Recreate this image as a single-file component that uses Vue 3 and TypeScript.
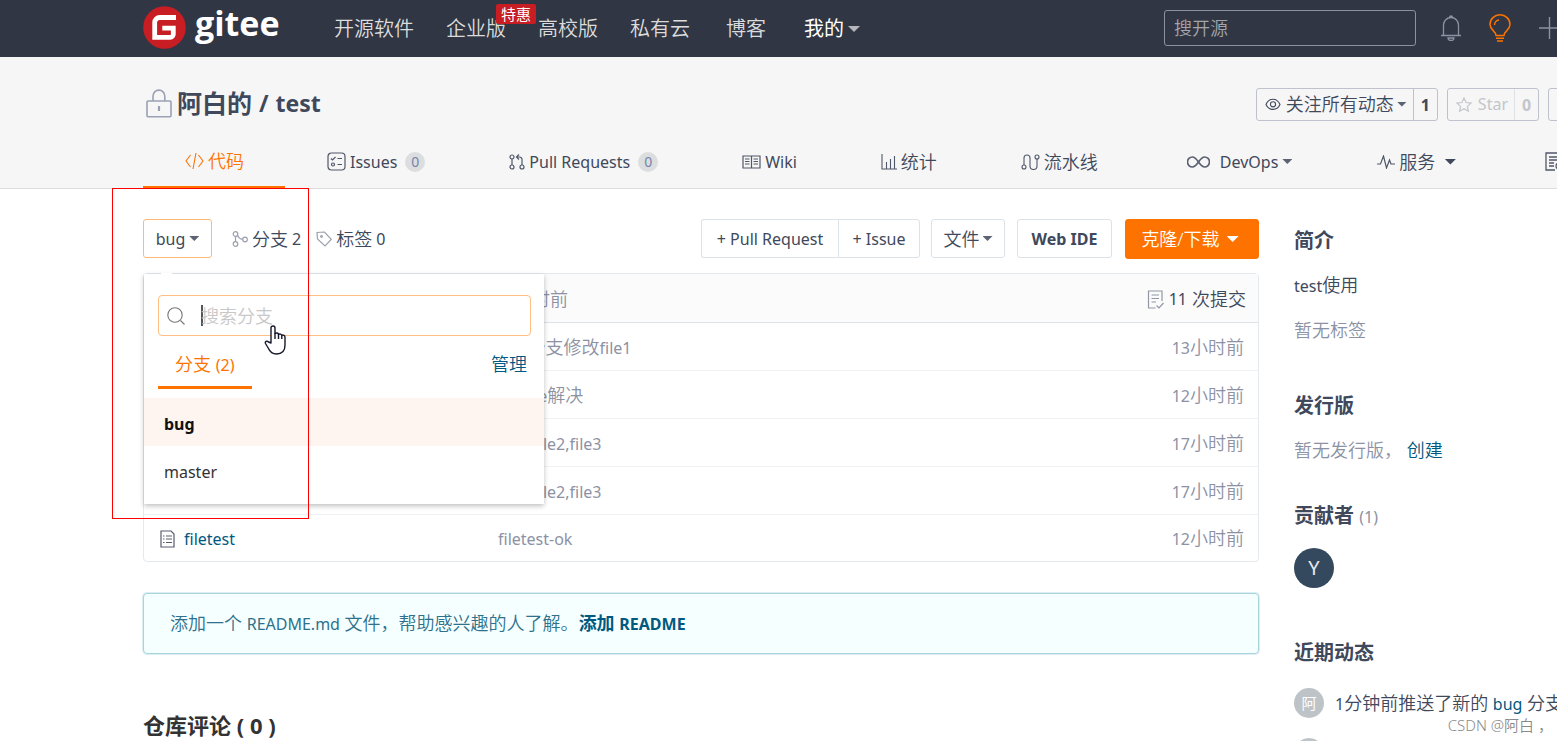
<script setup lang="ts">
import { ref } from 'vue'

interface FileRow {
  name: string
  latinBefore: string
  cjk: string
  latinAfter: string
  hours: number
}

const rows: FileRow[] = [
  { name: 'file1', latinBefore: 'bug', cjk: '分支修改', latinAfter: 'file1', hours: 13 },
  { name: 'file2', latinBefore: 'merge', cjk: '解决', latinAfter: '', hours: 12 },
  { name: 'file3', latinBefore: 'new file2,file3', cjk: '', latinAfter: '', hours: 17 },
  { name: 'file4', latinBefore: 'new file2,file3', cjk: '', latinAfter: '', hours: 17 },
  { name: 'filetest', latinBefore: 'filetest-ok', cjk: '', latinAfter: '', hours: 12 },
]

const branches = ['bug', 'master']
const current = ref('bug')
const keyword = ref('')
const siteKeyword = ref('')
</script>

<template>
  <div class="page">
    <header class="topbar">
      <a class="logo" href="#" aria-label="gitee">
        <svg width="43" height="43" viewBox="0 0 43 43">
          <circle cx="21.500" cy="21.500" r="21.300" fill="#c71d23" />
          <path d="M33 11.500H16.700a5 5 0 0 0-5 5V31.300H27.300a3 3 0 0 0 3-3V22.200H19.300" fill="none" stroke="#fff" stroke-width="4.800" />
        </svg>
        <span class="logo-text">gitee</span>
      </a>
      <nav class="mainnav">
        <a href="#">开源软件</a>
        <a href="#" class="promo">企业版<span class="promo-tag">特惠</span></a>
        <a href="#">高校版</a>
        <a href="#">私有云</a>
        <a href="#">博客</a>
        <a href="#" class="mine">我的<i class="caret" /></a>
      </nav>
      <input v-model="siteKeyword" class="site-search" type="text" placeholder="搜开源" aria-label="搜开源" />
      <div class="top-icons">
        <button type="button" aria-label="通知">
          <svg width="20" height="26" viewBox="0 0 20 26" fill="none" stroke="#8c92a4" stroke-width="1.300">
            <path d="M0 20.500H20M2.500 20.500V10a7.500 7.500 0 0 1 15 0V20.500M8.500 2.500a1.500 1.500 0 0 1 3 0M7 23a3 2.500 0 0 0 6 0Z" />
          </svg>
        </button>
        <button type="button" aria-label="提示">
          <svg width="22" height="28" viewBox="0 0 22 28" fill="none" stroke="#fe7300" stroke-width="1.500">
            <path d="M7 21.500C7 17 1 16 1 10.500a10 9.700 0 0 1 20 0C21 16 15 17 15 21.500Z" />
            <path d="M5.500 11a5 5 0 0 1 4.500-5M7 24.200h8M8 27h6" />
          </svg>
        </button>
        <button type="button" aria-label="新建">
          <svg width="20" height="22" viewBox="0 0 20 22" fill="none" stroke="#8c92a4" stroke-width="1.400">
            <path d="M0 11H20M10.500 0V22" />
          </svg>
        </button>
      </div>
    </header>

    <section class="repo-head">
      <div class="repo-line">
        <h1>
          <svg width="26" height="29" viewBox="0 0 26 29" fill="none" stroke="#9aa1b5" stroke-width="1.600">
            <rect x="1" y="12" width="24" height="15.800" rx="1" />
            <path d="M7 12V7a5.800 5.800 0 0 1 11.800 0V12" />
            <path d="M13 17V22" stroke-width="2.200" />
          </svg>
          <a href="#">阿白的</a><span class="lat">/</span><a href="#" class="lat">test</a>
        </h1>
        <div class="repo-actions">
          <div class="split">
            <button type="button" class="watch">
              <svg width="16" height="13" viewBox="0 0 16 13" fill="none" stroke="#40485b" stroke-width="1.100">
                <path d="M1 6.500C4-.500 12-.500 15 6.500 12 13 4 13 1 6.500Z" />
                <circle cx="8" cy="6.300" r="2.600" />
              </svg>
              关注所有动态<i class="caret small" />
            </button>
            <a href="#" class="count lat">1</a>
          </div>
          <div class="split disabled">
            <button type="button" class="star lat" disabled>
              <svg width="16" height="15" viewBox="0 0 16 15" fill="none" stroke="#c3c5cb" stroke-width="1.200">
                <path d="M8 1l2.100 4.500 4.900.600-3.600 3.300.950 4.800L8 11.800l-4.350 2.400.950-4.800L1 6.100l4.900-.600Z" />
              </svg>
              Star
            </button>
            <span class="count lat">0</span>
          </div>
          <div class="split"><button type="button" class="fork" aria-label="Fork" /></div>
        </div>
      </div>
      <nav class="tabs">
        <a href="#" class="active">
          <svg width="19" height="16" viewBox="0 0 19 16" fill="none" stroke="#fe7300" stroke-width="1.100"><path d="M5.500 2L1 8l4.500 6M13.500 2L18 8l-4.500 6M11 0L8 16" /></svg>
          代码
        </a>
        <a href="#" class="lat">
          <svg width="19" height="19" viewBox="0 0 19 19" fill="none" stroke="#505769" stroke-width="1.200">
            <rect x="1" y="1" width="17" height="17" rx="3.500" />
            <path d="M4 6.500l1.500 1.500L8.500 5M10.500 6.500H15M10.500 12.500H15" /><circle cx="6" cy="12.500" r="1.500" />
          </svg>
          Issues<span class="badge">0</span>
        </a>
        <a href="#" class="lat">
          <svg width="16" height="16" viewBox="0 0 16 16" fill="none" stroke="#505769" stroke-width="1.200">
            <circle cx="3" cy="3" r="2" /><circle cx="3" cy="13" r="2" /><circle cx="13" cy="13" r="2" />
            <path d="M3 5V11M13 11V5.500a2.500 2.500 0 0 0-2.500-2.500H8M10 .500L7.500 3 10 5.500" />
          </svg>
          Pull Requests<span class="badge">0</span>
        </a>
        <a href="#" class="lat">
          <svg width="19" height="14" viewBox="0 0 19 14" fill="none" stroke="#505769" stroke-width="1.200">
            <path d="M1 1H18V13H1ZM9.500 1V13M3 4H7.500M3 6.500H7.500M3 9H7.500M11.500 4H16M11.500 6.500H16M11.500 9H16" />
          </svg>
          Wiki
        </a>
        <a href="#">
          <svg width="16" height="16" viewBox="0 0 16 16" fill="none" stroke="#505769" stroke-width="1.100"><path d="M1 0V15H16M5.500 15V8M9.500 15V5M13.500 15V2" /></svg>
          统计
        </a>
        <a href="#">
          <svg width="19" height="16" viewBox="0 0 19 16" fill="none" stroke="#505769" stroke-width="1.100">
            <circle cx="3" cy="13" r="2" /><circle cx="16" cy="3" r="2" />
            <path d="M3 11V4a3 3 0 0 1 6 0V12a3 3 0 0 0 7 0V5" />
          </svg>
          流水线
        </a>
        <a href="#" class="lat devops">
          <svg width="23" height="12" viewBox="0 0 23 12" fill="none" stroke="#5a6072" stroke-width="1.700">
            <path d="M11.500 6C9 2.500 7.500 1 5.500 1a4.800 4.800 0 0 0 0 10c2 0 3.500-1.500 6-5s4-5 6-5a4.800 4.800 0 0 1 0 10c-2 0-3.500-1.500-6-5Z" />
          </svg>
          DevOps<i class="caret small" />
        </a>
        <a href="#" class="service">
          <svg width="18" height="14" viewBox="0 0 18 14" fill="none" stroke="#505769" stroke-width="1.200"><path d="M0 9H3.500L6.500 1 9.500 13 12.500 5 14 9H18" /></svg>
          服务<i class="caret" />
        </a>
        <a href="#" aria-label="管理">
          <svg width="19" height="19" viewBox="0 0 19 19" fill="none" stroke="#505769" stroke-width="1.300"><path d="M10 18H1V1H16V9M4 5H13M4 8H13M4 11H9M4 14H9" /><circle cx="14" cy="14" r="3" /></svg>
        </a>
      </nav>
    </section>

    <div class="body">
      <main>
        <div class="toolbar">
          <div class="picker">
            <button type="button" class="btn branch-btn lat" aria-expanded="true">{{ current }}<i class="caret small" /></button>
            <div class="dropdown">
              <label class="branch-search">
                <svg width="18" height="18" viewBox="0 0 18 18" fill="none" stroke="#777" stroke-width="1.100"><circle cx="8" cy="8" r="7.200" /><path d="M13.500 13.500L17.500 17.500" /></svg>
                <i class="text-cursor" />
                <input v-model="keyword" type="text" placeholder="搜索分支" aria-label="搜索分支" />
              </label>
              <div class="drop-tabs">
                <a href="#" class="drop-tab">分支 <span class="lat">(2)</span></a>
                <a href="#" class="manage">管理</a>
              </div>
              <ul class="lat">
                <li v-for="b in branches" :key="b">
                  <button type="button" :class="{ on: b === current }" @click="current = b">{{ b }}</button>
                </li>
              </ul>
            </div>
          </div>
          <a href="#" class="stat branches">
            <svg width="16" height="16" viewBox="0 0 16 16" fill="none" stroke="#9aa0ad" stroke-width="1.200"><circle cx="3.500" cy="3" r="2.300" /><circle cx="3.500" cy="13" r="2.300" /><circle cx="13" cy="8.500" r="2.300" /><path d="M3.500 5.300V10.700M5.500 4.500C6.500 7 8.500 8 10.700 8.300" /></svg>
            分支 <span class="lat">2</span>
          </a>
          <a href="#" class="stat">
            <svg width="16" height="16" viewBox="0 0 16 16" fill="none" stroke="#9aa0ad" stroke-width="1.200"><path d="M1 1.500L8.500 1 15.300 8.300 9 15 1.500 8Z" /><circle cx="5.500" cy="5.500" r=".800" /></svg>
            标签 <span class="lat">0</span>
          </a>
          <div class="group lat">
            <button type="button" class="btn">+ Pull Request</button>
            <button type="button" class="btn">+ Issue</button>
          </div>
          <button type="button" class="btn file-btn">文件<i class="caret small" /></button>
          <button type="button" class="btn ide-btn lat">Web IDE</button>
          <button type="button" class="btn clone-btn">克隆/下载<i class="caret" /></button>
        </div>

        <div class="files">
          <table>
            <thead>
              <tr>
                <th scope="col" colspan="2" class="latest">最近一次提交于&nbsp;<span class="lat">12</span>小时前</th>
                <th scope="col" class="commits">
                  <a href="#">
                    <svg width="17" height="19" viewBox="0 0 17 19" fill="none" stroke="#9097a6" stroke-width="1.200"><path d="M15 11V1H1.500V18H8.500M4.500 5H12M4.500 8.500H12M4.500 12H9M9.500 15.500l2.500 2.500 4.500-5" /></svg>
                    <span class="lat">11</span> 次提交
                  </a>
                </th>
              </tr>
            </thead>
            <tbody>
              <tr v-for="row in rows" :key="row.name">
                <td class="name">
                  <a href="#" class="lat">
                    <svg width="15" height="18" viewBox="0 0 15 18" fill="none" stroke="#565c6c" stroke-width="1.200"><path d="M1 1H11L14 4V17H1ZM6 6H12M6 9H12M6 12.500H12M3 6H4.500M3 9H4.500M3 12.500H4.500" /></svg>
                    {{ row.name }}
                  </a>
                </td>
                <td class="msg"><span class="lat">{{ row.latinBefore }}</span>{{ row.cjk }}<span class="lat">{{ row.latinAfter }}</span></td>
                <td class="time"><span class="lat">{{ row.hours }}</span>小时前</td>
              </tr>
            </tbody>
          </table>
        </div>

        <div class="readme">
          <span>添加一个 <span class="lat">README.md</span> 文件，帮助感兴趣的人了解。</span>
          <a href="#">添加 <span class="lat">README</span></a>
        </div>

        <h2 class="comments">仓库评论 <span class="lat">( 0 )</span></h2>
      </main>

      <aside>
        <section class="intro">
          <h3>简介</h3>
          <p class="desc"><span class="lat">test</span>使用</p>
          <p class="muted">暂无标签</p>
        </section>
        <section class="release">
          <h3>发行版</h3>
          <p class="muted">暂无发行版， <a href="#">创建</a></p>
        </section>
        <section class="contrib">
          <h3>贡献者 <span class="lat">(1)</span></h3>
          <a href="#" class="avatar lat">Y</a>
        </section>
        <section class="activity">
          <h3>近期动态</h3>
          <div class="event">
            <span class="mini">阿</span>
            <p><span class="lat">1</span>分钟前推送了新的 <a href="#" class="lat">bug</a> 分支</p>
          </div>
          <div class="event"><span class="mini" /></div>
        </section>
      </aside>
    </div>

    <div class="marker" />
    <svg class="pointer" width="22" height="30" viewBox="0 0 22 30" fill="#fff" stroke="#15182b" stroke-width="1.400" stroke-linejoin="round">
      <path d="M7 18V3a2 2 0 0 1 4 0V8.500c1.500-1 3-.500 3.500.800 1.500-.800 2.800-.200 3.200 1 1.600-.700 3.300.200 3.300 2V20c0 6-3 9-8.500 9C8 29 6 27 4.500 23.500L1.500 18.500c-1-2 1.500-3 3-1.500Z" />
      <path d="M11 8V14M14.500 9V14M17.800 10V14" fill="none" />
    </svg>
    <span class="watermark">CSDN @阿白 ，</span>
  </div>
</template>

<style>
html,
body {
  margin: 0;
  background: #fff;
}
html {
  overflow: hidden;
}
</style>

<style scoped>
.page {
  position: relative;
  height: 100vh;
  overflow: hidden;
  background: #fff;
  color: #40485b;
  font-family: "Noto Sans", "Noto Sans CJK SC", sans-serif;
  font-size: 18px;
  font-weight: 350;
  line-height: 24px;
}
.page * {
  box-sizing: border-box;
}
.page svg {
  flex: none;
}
.lat {
  font-size: 16px;
  font-weight: 400;
}
a {
  color: inherit;
  text-decoration: none;
}
button,
input {
  margin: 0;
  padding: 0;
  border: 0;
  background: none;
  color: inherit;
  font-family: inherit;
  font-size: 18px;
  font-weight: 350;
  line-height: 24px;
}
button.lat {
  font-size: 16px;
  font-weight: 400;
}
h1,
h2,
h3,
p,
ul {
  margin: 0;
  padding: 0;
}
.caret {
  flex: none;
  width: 12px;
  height: 6px;
  background: currentColor;
  clip-path: polygon(0 0, 100% 0, 50% 100%);
}
.caret.small {
  width: 10px;
  height: 5px;
  opacity: 0.85;
}

.topbar {
  display: flex;
  align-items: center;
  height: 57px;
  padding: 0 0 1px 143px;
  background: #303643;
  color: #dcdcdc;
}
.logo {
  display: flex;
  align-items: center;
  gap: 9px;
  width: 191px;
  padding-bottom: 2px;
}
.logo-text {
  padding-bottom: 8px;
  color: #fff;
  font-family: "Open Sans", sans-serif;
  font-size: 34px;
  font-weight: 700;
  line-height: 36px;
}
.mainnav {
  display: flex;
  gap: 32px;
  padding-top: 2px;
  font-size: 20px;
  white-space: nowrap;
}
.mainnav .mine {
  display: flex;
  align-items: center;
  gap: 4px;
  margin-left: 6px;
  color: #fff;
  font-weight: 400;
}
.mine .caret {
  color: #b4b6ba;
}
.mainnav a:nth-child(5) {
  margin-left: 4px;
}
.promo {
  position: relative;
}
.promo-tag {
  position: absolute;
  top: -13px;
  left: 50px;
  width: 40px;
  border-radius: 2px;
  background: #c71d23;
  color: #fff;
  font-size: 15px;
  font-weight: 400;
  line-height: 20px;
  text-align: center;
}
.site-search {
  width: 252px;
  height: 36px;
  margin-left: auto;
  padding: 0 9px;
  border: 1px solid #8c92a0;
  border-radius: 3px;
}
.site-search::placeholder {
  color: #a3a5aa;
  opacity: 1;
}
.top-icons {
  display: flex;
  align-items: center;
  gap: 28px;
  margin: 0 -2px 0 25px;
}
.top-icons button {
  display: flex;
}

.repo-head {
  height: 132px;
  padding-left: 143px;
  border-bottom: 1px solid #dcdddf;
  background: #f6f6f6;
}
.repo-line {
  display: flex;
  align-items: center;
  height: 78px;
  padding-top: 16px;
}
h1 {
  display: flex;
  align-items: center;
  gap: 7px;
  padding: 0 0 2px 3px;
  font-size: 25px;
  font-weight: 700;
  line-height: 32px;
}
h1 svg {
  margin-right: -2px;
}
h1 .lat {
  font-size: 23px;
  font-weight: 700;
}
.repo-actions {
  display: flex;
  gap: 9px;
  margin-left: auto;
  margin-right: -81px;
}
.split {
  display: flex;
  height: 33px;
  border: 1px solid #bfc2cc;
  border-radius: 3px;
  white-space: nowrap;
}
.split button {
  display: flex;
  align-items: center;
  gap: 6px;
}
.split .watch {
  gap: 5px;
  padding: 0 6px 0 8px;
}
.watch .caret {
  margin-left: -2px;
}
.split .fork {
  width: 88px;
}
.split .star {
  padding: 0 6px 0 8px;
}
.split .count {
  width: 24px;
  border-left: 1px solid #bfc2cc;
  font-weight: 700;
  line-height: 33px;
  text-align: center;
}
.disabled,
.disabled button {
  color: #c3c5cb;
}
.disabled .count {
  border-color: #e0e1e5;
}
.tabs {
  display: flex;
  white-space: nowrap;
}
.tabs a {
  display: flex;
  flex: none;
  align-items: center;
  gap: 4px;
  height: 53px;
  padding: 0 42px;
}
.tabs .active {
  padding-right: 41px;
  border-bottom: 2px solid #fe7300;
  color: #fe7300;
}
.tabs .devops {
  padding: 0 43px 0 47px;
}
.devops svg {
  margin-right: 6px;
}
.tabs .service {
  padding-right: 47px;
}
.service .caret {
  margin-left: 5px;
}
.badge {
  min-width: 20px;
  height: 20px;
  margin-left: 4px;
  border-radius: 10px;
  background: #dcdddf;
  color: #7484ab;
  font-size: 14px;
  line-height: 20px;
  text-align: center;
}

.body {
  display: grid;
  grid-template-columns: minmax(0, 1fr) 263px;
  gap: 35px;
  padding: 30px 0 0 143px;
}
.toolbar {
  display: flex;
  align-items: flex-start;
  height: 40px;
  white-space: nowrap;
}
.btn {
  display: flex;
  align-items: center;
  justify-content: center;
  height: 39px;
  border: 1px solid #dce3e8;
  border-radius: 3px;
}
.picker {
  position: relative;
}
.branch-btn {
  gap: 4px;
  width: 69px;
  border-color: #ffb977;
}
.stat {
  display: flex;
  align-items: center;
  gap: 4px;
  height: 40px;
  margin-left: 15px;
}
.branches {
  margin-left: 20px;
}
.group {
  display: flex;
  margin-left: auto;
}
.group .btn {
  font-size: 16px;
  font-weight: 400;
}
.group .btn:first-child {
  width: 137px;
  border-right: 0;
  border-radius: 3px 0 0 3px;
}
.group .btn:last-child {
  width: 82px;
  border-radius: 0 3px 3px 0;
}
.file-btn {
  gap: 3px;
  width: 74px;
  margin-left: 11px;
}
.btn.ide-btn {
  width: 95px;
  margin-left: 12px;
  font-weight: 700;
}
.clone-btn {
  gap: 7px;
  width: 134px;
  height: 40px;
  margin-left: 13px;
  padding-right: 4px;
  border-color: #fe7300;
  background: #fe7300;
  color: #fff;
}

.dropdown {
  position: absolute;
  z-index: 2;
  top: 55px;
  left: 1px;
  width: 400px;
  padding: 21px 0 10px;
  background: #fff;
  box-shadow: 0 2px 5px rgba(0, 0, 0, 0.25);
}
.dropdown::before {
  position: absolute;
  top: -1px;
  left: 17px;
  width: 11px;
  height: 1px;
  background: #fff;
  content: "";
}
.branch-search {
  display: flex;
  align-items: center;
  height: 41px;
  margin: 0 13px 0 14px;
  padding-left: 8px;
  border: 1px solid #ffbe82;
  border-radius: 4px;
}
.branch-search input {
  flex: 1;
  min-width: 0;
}
.branch-search input::placeholder {
  color: #c8c8c8;
  opacity: 1;
}
.text-cursor {
  width: 2px;
  height: 21px;
  margin: 0 -2px 0 16px;
  background: #555;
}
.drop-tabs {
  display: flex;
  justify-content: space-between;
  height: 53px;
  margin: 0 17px 9px 14px;
}
.drop-tab {
  padding: 0 18px 0 17px;
  border-bottom: 3px solid #fe7300;
  color: #fe7300;
  line-height: 56px;
}
.manage {
  color: #005980;
  line-height: 56px;
}
.dropdown ul {
  list-style: none;
}
.dropdown ul button {
  display: block;
  width: 100%;
  height: 48px;
  padding: 4px 20px 0;
  color: #333;
  font-size: 16px;
  font-weight: 400;
  text-align: left;
}
.dropdown ul button.on {
  background: #fff5f0;
  color: #111;
  font-weight: 700;
}

.files {
  margin-top: 14px;
  border: 1px solid #e3e9ed;
  border-radius: 4px;
}
table {
  width: 100%;
  height: 287px;
  border-spacing: 0;
}
th,
td {
  padding: 0;
  font-weight: 350;
  text-align: left;
}
th {
  height: 49px;
  padding-top: 2px;
  border-bottom: 1px solid #dce3e8;
  background: #fbfbfb;
}
td {
  padding-top: 2px;
  border-bottom: 1px solid #f0f2f5;
}
tbody tr:last-child td {
  border-bottom: 0;
}
.latest {
  padding-left: 221px;
  color: #8c92a4;
}
.commits a {
  display: flex;
  align-items: center;
  justify-content: flex-end;
  gap: 5px;
  padding-right: 12px;
}
.name {
  width: 354px;
  padding-left: 16px;
  color: #005980;
}
.name a {
  display: flex;
  align-items: center;
  gap: 9px;
}
.msg {
  color: #8c92a4;
}
.time {
  padding-right: 14px;
  color: #8c92a4;
  text-align: right;
}
.readme {
  display: flex;
  align-items: center;
  height: 61px;
  margin-top: 31px;
  padding-left: 26px;
  border: 1px solid #a9d5de;
  border-radius: 4px;
  background: #f6ffff;
  box-shadow: 0 0 0 1px rgba(169, 213, 222, 0.4);
  color: #2d718c;
  white-space: nowrap;
}
.readme a {
  color: #005980;
  font-weight: 700;
}
.readme a .lat {
  font-weight: 700;
}
.comments {
  margin-top: 55px;
  color: #333;
  font-size: 22px;
  font-weight: 700;
  line-height: 32px;
  white-space: nowrap;
}
.comments .lat {
  font-size: 22px;
  font-weight: 700;
}

aside {
  white-space: nowrap;
}
h3 {
  font-size: 20px;
  font-weight: 700;
  line-height: 30px;
}
h3 .lat {
  color: #8c92a4;
}
.muted {
  color: #8c92a4;
}
.muted a {
  color: #005980;
}
.intro {
  padding-top: 7px;
}
.desc {
  margin: 17px 0 20px;
}
.release {
  margin-top: 49px;
}
.release .muted {
  margin-top: 17px;
}
.contrib {
  margin-top: 39px;
}
.avatar {
  display: block;
  width: 40px;
  height: 40px;
  margin-top: 16px;
  border-radius: 50%;
  background: #34495e;
  color: #e8eaed;
  font-size: 20px;
  line-height: 40px;
  text-align: center;
}
.activity {
  margin-top: 50px;
}
.activity h3 {
  margin-bottom: 20px;
}
.event {
  display: flex;
  align-items: center;
  gap: 11px;
  margin-bottom: 20px;
}
.mini {
  flex: none;
  width: 30px;
  height: 30px;
  border-radius: 50%;
  background: #bdc3c7;
  color: #fff;
  font-size: 15px;
  font-weight: 400;
  line-height: 30px;
  text-align: center;
}
.event a {
  color: #005980;
}

.marker {
  position: absolute;
  z-index: 3;
  top: 188px;
  left: 112px;
  width: 197px;
  height: 331px;
  border: 1px solid #fe0000;
}
.pointer {
  position: absolute;
  z-index: 4;
  top: 325px;
  left: 264px;
}
.watermark {
  position: absolute;
  z-index: 4;
  right: 4px;
  bottom: 4px;
  color: #8a8a8a;
  font-size: 15px;
  line-height: 24px;
}
</style>
